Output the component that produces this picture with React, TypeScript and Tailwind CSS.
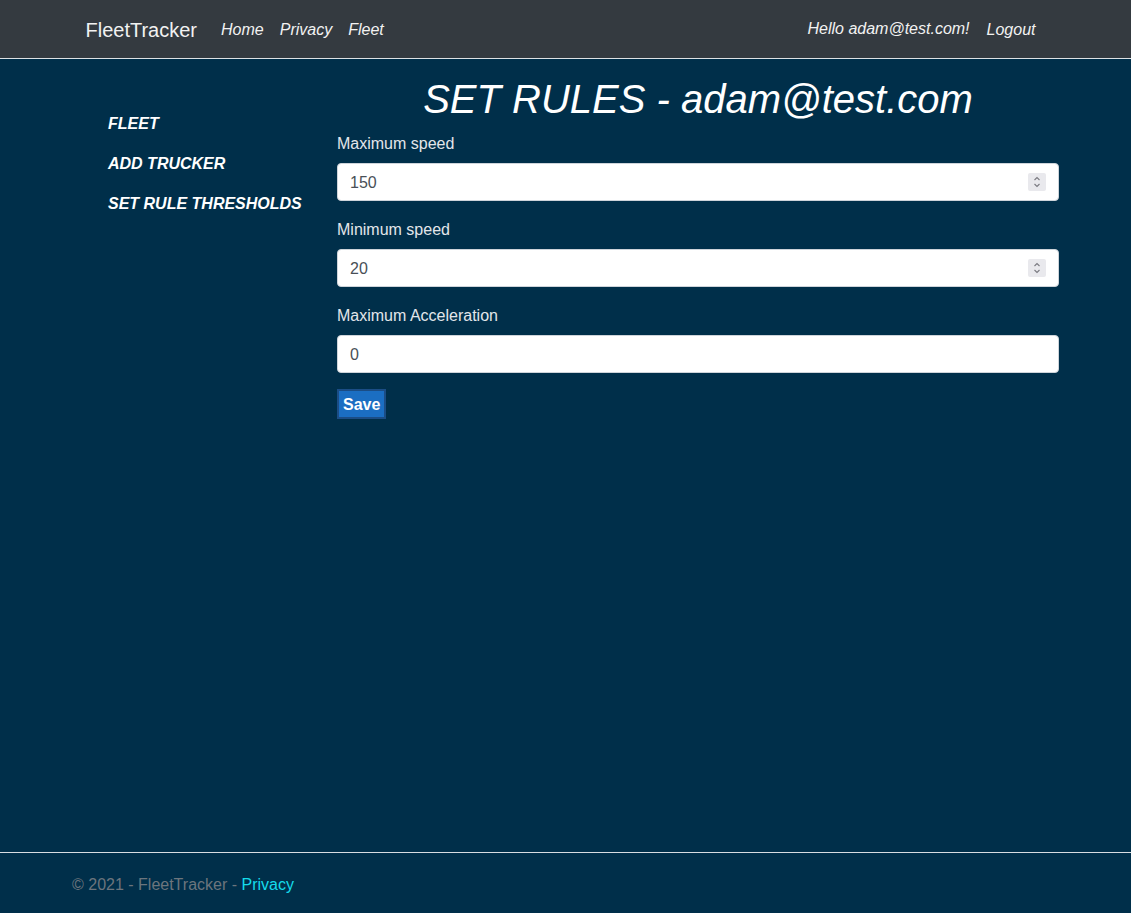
import React from "react";

function Spinner() {
  return (
    <div className="absolute right-[13px] top-[10px] w-[18px] h-[18px] bg-[#e9e9ed] rounded-[2px] flex flex-col items-center justify-center">
      <svg width="10" height="14" viewBox="0 0 10 14" fill="none" stroke="#7a7a80" strokeWidth="1.1">
        <path d="M2.5 5 L5 2.5 L7.5 5" />
        <path d="M2.5 9 L5 11.5 L7.5 9" />
      </svg>
    </div>
  );
}

function Field({ label, value, spin }: { label: string; value: string; spin?: boolean }) {
  return (
    <div className="mb-4">
      <label className="block text-[16px] leading-6 text-[#e3e6ea] pt-[1px] mb-[7px]">{label}</label>
      <div className="relative">
        <input
          type="text"
          defaultValue={value}
          className="block w-full h-[38px] px-3 pt-[2px] text-[16px] text-[#495057] bg-white border border-[#ced4da] rounded-[4px] outline-none"
        />
        {spin && <Spinner />}
      </div>
    </div>
  );
}

export default function App() {
  return (
    <div
      className="min-h-screen flex flex-col bg-[#002f4a]"
      style={{ fontFamily: '"Liberation Sans", Arial, sans-serif' }}
    >
      <nav className="h-[59px] bg-[#343a40] border-b border-[#dde1e4] flex items-center shrink-0">
        <div className="w-[960px] mx-auto flex items-center pt-[2px]">
          <span className="text-[20px] leading-[30px] text-[#f2f2f2] mr-4">FleetTracker</span>
          <a className="px-2 text-[16px] italic text-[#f2f2f2]">Home</a>
          <a className="px-2 text-[16px] italic text-[#f2f2f2]">Privacy</a>
          <a className="px-2 text-[16px] italic text-[#f2f2f2]">Fleet</a>
          <div className="ml-auto flex items-center mr-[2px]">
            <span className="px-2 text-[16px] italic text-[#f2f2f2] -mt-[2px] mr-[1px]">Hello adam@test.com!</span>
            <a className="px-2 text-[16px] italic text-[#f2f2f2]">Logout</a>
          </div>
        </div>
      </nav>

      <main className="flex-1 flex pl-[108px]">
        <aside className="w-[229px] pt-[45px] shrink-0">
          <div className="py-2 leading-6 text-[16px] font-bold italic text-white">FLEET</div>
          <div className="py-2 leading-6 text-[16px] font-bold italic text-white">ADD TRUCKER</div>
          <div className="py-2 leading-6 text-[16px] font-bold italic text-white">SET RULE THRESHOLDS</div>
        </aside>
        <section className="w-[722px] pt-4">
          <h1 className="text-[40px] leading-[48px] italic text-white text-center mb-2">
            SET RULES - adam@test.com
          </h1>
          <Field label="Maximum speed" value="150" spin />
          <Field label="Minimum speed" value="20" spin />
          <Field label="Maximum Acceleration" value="0" />
          <button className="h-[30px] px-[4px] pt-[2px] border-2 border-[#1b4d85] bg-[#1b6ec2] text-white font-bold text-[16px] leading-6 flex items-center">
            Save
          </button>
        </section>
      </main>

      <footer className="h-[61px] border-t border-[#d8dde2] flex items-center pl-[72px] pt-[3px] shrink-0">
        <span className="text-[16px] text-[#6c757d]">
          © 2021 - FleetTracker - <a className="text-[#15dbea]">Privacy</a>
        </span>
      </footer>
    </div>
  );
}
